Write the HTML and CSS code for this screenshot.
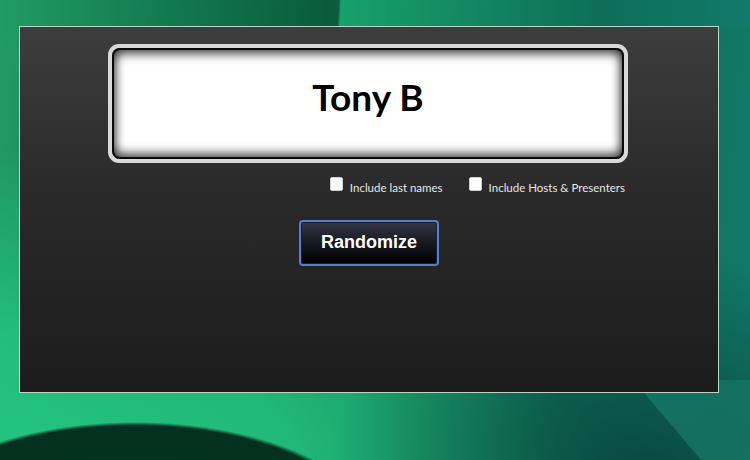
FILE: index.html
```html
<!DOCTYPE html>
<html>
<head>
<meta charset="utf-8">
<link rel="stylesheet" href="styles.css">
</head>
<body>
<div class="panel">
  <div class="display">
    <div class="display-inner">Tony B</div>
  </div>
  <div class="options">
    <label class="opt"><input type="checkbox" class="cb"><span>Include last names</span></label>
    <label class="opt"><input type="checkbox" class="cb"><span>Include Hosts &amp; Presenters</span></label>
  </div>
  <button class="randomize">Randomize</button>
</div>
</body>
</html>
```
FILE: styles.css
```css
html, body {
  margin: 0;
  padding: 0;
}
body {
  width: 750px;
  height: 460px;
  overflow: hidden;
  background:
    linear-gradient(93deg, #219c64 0%, #137a50 22%, #0a5e3e 42%, #0b5a3e 45.1%, #17a06c 45.4%, #128460 65%, #0e6e58 80%, #117a6a 100%) 0 0 / 750px 27px no-repeat,
    radial-gradient(ellipse 245px 118px at 135px 540px, #063a26 0%, #04301f 97%, rgba(4,48,31,0) 100%) 0 0 / 750px 460px no-repeat,
    linear-gradient(49.6deg, rgba(0,0,0,0) 85.6%, rgba(30,140,120,0.5) 85.8%, rgba(30,140,120,0.35) 100%) 0 380px / 750px 80px no-repeat,
    radial-gradient(ellipse 320px 220px at 650px 470px, rgba(8,62,56,0.8) 0%, rgba(8,62,56,0) 100%) 0 0 / 750px 460px no-repeat,
    radial-gradient(ellipse 560px 330px at 40px 480px, rgba(36,200,130,0.95) 0%, rgba(36,200,130,0.8) 45%, rgba(36,200,130,0) 100%) 0 0 / 750px 460px no-repeat,
    linear-gradient(96deg, #219c64 0%, #137a50 22%, #128058 50%, #0f7058 75%, #117a6a 100%) 0 0 / 750px 460px no-repeat;
  background-color: #117a5a;
  font-family: "Lato", "Open Sans", sans-serif;
}
.panel {
  margin: 26px 0 0 19px;
  width: 698px;
  height: 348px;
  border: 1px solid #b7d6c6;
  background: linear-gradient(180deg, #3d3d3d 0%, #2a2a2a 45%, #1c1c1c 100%);
  display: flex;
  flex-direction: column;
  align-items: center;
  padding-top: 17px;
}
.display {
  width: 512px;
  height: 111px;
  padding: 4px;
  border-radius: 11px;
  background: #d9d9d9;
  margin-left: -2px;
}
.display-inner {
  height: 100%;
  border-radius: 8px;
  background: #fff;
  box-shadow:
    inset 0 0 0 2px #0a0a0a,
    inset 0 7px 10px rgba(0,0,0,0.55),
    inset 0 -7px 10px rgba(0,0,0,0.5),
    inset 6px 0 8px rgba(0,0,0,0.35),
    inset -6px 0 8px rgba(0,0,0,0.35);
  display: flex;
  align-items: center;
  justify-content: center;
  font-family: "Lato", "Open Sans", sans-serif;
  font-weight: 700;
  font-size: 37px;
  color: #000;
  padding-bottom: 14px;
  box-sizing: border-box;
}
.options {
  width: 520px;
  display: flex;
  justify-content: flex-end;
  gap: 26px;
  margin-top: 14px;
  margin-left: -2px;
  padding-right: 3px;
  box-sizing: border-box;
}
.opt {
  display: flex;
  align-items: flex-start;
  gap: 7px;
  color: #e6e6e6;
  font-size: 11.5px;
  line-height: 13px;
}
.opt span {
  padding-top: 4px;
}
.cb {
  appearance: none;
  -webkit-appearance: none;
  margin: 0;
  width: 13px;
  height: 14px;
  background: #fff;
  border-radius: 2px;
  border: 1px solid #cfcfcf;
  box-sizing: border-box;
}
.randomize {
  margin-top: 26px;
  width: 140px;
  height: 46px;
  border: 2px solid #5a7cd0;
  border-radius: 4px;
  background: linear-gradient(180deg, #343846 0%, #14161c 55%, #000 100%);
  color: #fff;
  font-family: "Liberation Sans", Arial, sans-serif;
  font-weight: 700;
  font-size: 18px;
  padding: 0 0 2px 0;
  box-shadow: inset 0 0 0 1px #1a2030;
}
```
